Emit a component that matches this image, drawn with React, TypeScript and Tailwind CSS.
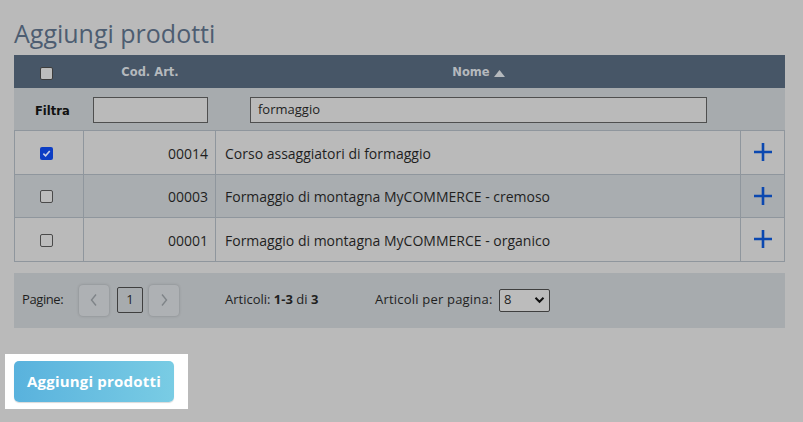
import React, {FC} from 'react';

interface IRow {
  code: string;
  name: string;
  checked?: boolean;
}

const rows: IRow[] = [
  {code: '00014', name: 'Corso assaggiatori di formaggio', checked: true},
  {code: '00003', name: 'Formaggio di montagna MyCOMMERCE - cremoso'},
  {code: '00001', name: 'Formaggio di montagna MyCOMMERCE - organico'},
];

const Check: FC<{checked?: boolean}> = ({checked}) =>
  checked ? (
    <span className="flex h-[13px] w-[13px] items-center justify-center rounded-[2px] bg-[#0c3dc4]">
      <svg width="9" height="9" viewBox="0 0 10 10">
        <path d="M1.5 5.2 L4 7.6 L8.6 2.2" stroke="#c9cfe6" strokeWidth="1.8" fill="none" />
      </svg>
    </span>
  ) : (
    <span className="block h-[13px] w-[13px] rounded-[2px] border border-[#4a4a4a] bg-[#bcbcbc]" />
  );

const Plus: FC = () => (
  <svg width="20" height="20" viewBox="0 0 20 20">
    <path d="M10 1 V19 M1 10 H19" stroke="#0b48b0" strokeWidth="2.6" />
  </svg>
);

const PageBtn: FC<{dir: 'prev' | 'next'}> = ({dir}) => (
  <button className="flex h-[31px] w-[30px] shrink-0 items-center justify-center rounded-[4px] bg-[#aeb1b4] shadow-[0_0_3px_rgba(0,0,0,0.22)]">
    <svg width="10" height="14" viewBox="0 0 10 14">
      <path d={dir === 'prev' ? 'M7 1.5 L2.5 7 L7 12.5' : 'M3 1.5 L7.5 7 L3 12.5'} stroke="#7f8488" strokeWidth="1.4" fill="none" />
    </svg>
  </button>
);

const App: FC = () => {
  return (
    <div className="h-[422px] w-[803px] bg-[#bababa] pl-[14px] pt-[17px] font-['Open_Sans',sans-serif] text-[#1f1f1f]">
      <h1 className="mb-[5px] h-[33px] text-[25px] leading-[33px] text-[#4d5d71]">Aggiungi prodotti</h1>

      <div className="w-[771px]">
        <div className="flex h-[33px] items-center bg-[#475667] pt-[3px] font-['DejaVu_Sans',sans-serif] text-[11.5px] font-bold text-[#b5b9bd]">
          <div className="flex w-[70px] shrink-0 justify-center pr-[6px]">
            <span className="block h-[13px] w-[13px] rounded-[2px] border border-[#3d3d3d] bg-[#bdbdbd]" />
          </div>
          <div className="w-[132px] shrink-0 text-center">Cod. Art.</div>
          <div className="flex flex-1 items-center justify-center gap-[4px] pr-[44px]">
            Nome
            <svg width="11" height="7" viewBox="0 0 11 7">
              <path d="M0 7 L5.5 0 L11 7 Z" fill="#b5b9bd" />
            </svg>
          </div>
        </div>

        <div className="flex h-[43px] items-center border-b border-[#8f969d] bg-[#a7abae] pt-[2px]">
          <div className="w-[79px] shrink-0 pl-[21px] pt-[3px] font-['DejaVu_Sans',sans-serif] text-[11.5px] font-bold text-[#111]">Filtra</div>
          <div className="h-[26px] w-[115px] shrink-0 border border-[#4f4f4f] bg-[#bababa]" />
          <div className="ml-[42px] flex h-[26px] w-[457px] items-center border border-[#4f4f4f] bg-[#bababa] pl-[7px] text-[13px]">
            formaggio
          </div>
        </div>

        {rows.map((r, i) => (
          <div
            key={r.code}
            className={`flex h-[43.5px] border-x border-b border-[#8f969d] text-[14px] ${i === 1 ? 'bg-[#a9adb0]' : 'bg-[#bababa]'}`}
          >
            <div className="flex w-[69px] shrink-0 items-center justify-center border-r border-[#8f969d] pr-[6px] pt-[2px]">
              <Check checked={r.checked} />
            </div>
            <div className="flex w-[132px] shrink-0 items-center justify-end border-r border-[#8f969d] pr-[7px] pt-[2px]">{r.code}</div>
            <div className="flex flex-1 items-center border-r border-[#8f969d] pl-[9px] pt-[2px]">{r.name}</div>
            <div className="flex w-[43px] shrink-0 items-center justify-center">
              <Plus />
            </div>
          </div>
        ))}

        <div className="mt-[11px] flex h-[55px] items-center bg-[#a7abae] pl-[8px] text-[13px]">
          <span className="w-[57px] shrink-0 tracking-[-0.4px]">Pagine:</span>
          <PageBtn dir="prev" />
          <span className="ml-[8px] flex h-[26px] w-[26px] shrink-0 items-center justify-center rounded-[2px] border border-[#3f3f3f] text-[13px]">
            1
          </span>
          <span className="ml-[6px]">
            <PageBtn dir="next" />
          </span>
          <span className="ml-[46px] w-[150px] shrink-0">
            Articoli: <b>1-3</b> di <b>3</b>
          </span>
          <span className="w-[124px] shrink-0 tracking-[0.2px]">Articoli per pagina:</span>
          <span className="flex h-[23px] w-[51px] items-center justify-between rounded-[2px] border border-[#3f3f3f] bg-[#bcbcbc] px-[4px]">
            8
            <svg width="11" height="8" viewBox="0 0 11 8">
              <path d="M1.5 1.8 L5.5 5.8 L9.5 1.8" stroke="#111" strokeWidth="2" fill="none" />
            </svg>
          </span>
        </div>
      </div>

      <div className="ml-[-9px] mt-[26px] w-[183px] bg-white px-[9px] py-[7px]">
        <button className="flex h-[41px] w-[160px] items-center justify-center rounded-[5px] bg-gradient-to-r from-[#59b2dd] to-[#79cce4] text-[15px] font-bold tracking-[0.2px] text-white shadow-[0_1px_1px_rgba(0,0,0,0.15)]">
          Aggiungi prodotti
        </button>
      </div>
    </div>
  );
};

export default App;
